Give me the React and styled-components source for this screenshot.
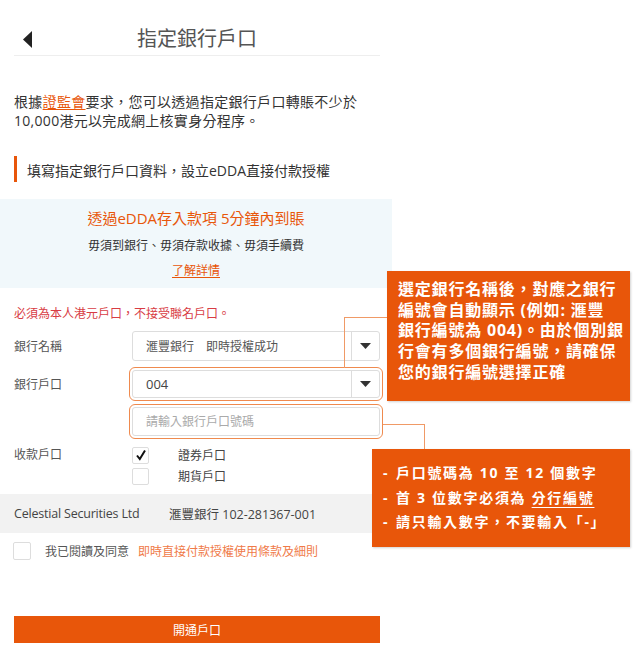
import React from 'react';
import styled, { createGlobalStyle, css } from 'styled-components';

const ORANGE = '#e8560a';

const GlobalStyle = createGlobalStyle`
  html, body {
    margin: 0;
    padding: 0;
    background: #fff;
  }
  body {
    font-family: "Open Sans", "Noto Sans CJK TC", sans-serif;
    color: #333;
  }
  * { box-sizing: border-box; }
`;

const Page = styled.div`
  position: relative;
  width: 642px;
  height: 665px;
  overflow: hidden;
`;

const Column = styled.div`
  width: 392px;
`;

const Header = styled.div`
  display: grid;
  grid-template-columns: 40px 1fr 40px;
  align-items: center;
  height: 56px;
  margin: 0 12px 0 14px;
  padding-top: 26px;
  padding-bottom: 4px;
  border-bottom: 1px solid #eeeeee;
`;

const Back = styled.div`
  display: flex;
  align-items: center;
  padding-left: 9px;
`;

const Title = styled.h1`
  margin: 0;
  text-align: center;
  font-size: 20px;
  font-weight: 400;
  line-height: 26px;
  color: #555;
`;

const Intro = styled.p`
  margin: 36px 12px 0 14px;
  font-size: 14px;
  line-height: 19px;
  letter-spacing: 0.3px;
  color: #333;
`;

const OrangeLink = styled.a`
  color: ${ORANGE};
  text-decoration: underline;
  text-underline-offset: 2px;
`;

const SectionTitle = styled.h2`
  display: flex;
  align-items: center;
  height: 26px;
  margin: 26px 12px 0 14px;
  padding: 2px 0 0 10px;
  border-left: 3px solid ${ORANGE};
  font-size: 14px;
  font-weight: 400;
  color: #333;
`;

const InfoPanel = styled.div`
  margin-top: 17px;
  padding: 9px 0 7px;
  background: #f1f8fb;
  text-align: center;
`;

const PanelTitle = styled.div`
  font-size: 15px;
  line-height: 20px;
  color: ${ORANGE};
`;

const PanelText = styled.div`
  margin-top: 8px;
  font-size: 12px;
  line-height: 20px;
  color: #333;
`;

const PanelLink = styled(OrangeLink)`
  display: inline-block;
  margin-top: 5px;
  font-size: 12px;
  line-height: 20px;
`;

const Form = styled.div`
  padding: 0 12px 0 14px;
`;

const Notice = styled.div`
  margin-top: 17px;
  font-size: 12px;
  line-height: 18px;
  color: #d83c44;
`;

const Row = styled.div`
  display: grid;
  grid-template-columns: 118px 1fr;
  align-items: ${p => (p.top ? 'start' : 'center')};
  margin-top: ${p => p.gap}px;
`;

const Label = styled.div`
  font-size: 12px;
  line-height: 17px;
  color: #555;
`;

const highlight = css`
  outline: 1px solid #ef8a4e;
  outline-offset: 2px;
`;

const Select = styled.div`
  display: flex;
  height: ${p => p.h || 30}px;
  border: 1px solid #dddddd;
  border-radius: 3px;
  background: #fff;
  ${p => p.highlight && highlight}
`;

const SelectValue = styled.div`
  flex: 1;
  display: flex;
  align-items: center;
  padding-left: 13px;
  font-size: ${p => (p.num ? 13 : 12)}px;
  color: ${p => (p.num ? '#444' : '#555')};
`;

const ArrowCell = styled.div`
  display: flex;
  align-items: center;
  justify-content: center;
  width: 28px;
  border-left: 1px solid #dddddd;
`;

const Input = styled.input`
  display: block;
  width: 100%;
  height: 29px;
  padding: 0 0 0 13px;
  border: 1px solid #dddddd;
  border-radius: 3px;
  font-family: inherit;
  font-size: 12px;
  color: #444;
  ${p => p.highlight && highlight}

  &::placeholder {
    color: #aaa;
  }
`;

const Checks = styled.div`
  display: flex;
  flex-direction: column;
  gap: 3px;
`;

const CheckItem = styled.div`
  display: flex;
  align-items: center;
`;

const Box = styled.div`
  display: flex;
  align-items: center;
  justify-content: center;
  width: ${p => p.size}px;
  height: ${p => p.size}px;
  border: 1px solid #dddddd;
  border-radius: 2px;
  background: #fff;
  flex-shrink: 0;
`;

const CheckLabel = styled.span`
  margin-left: 29px;
  font-size: 12px;
  color: #444;
`;

const Band = styled.div`
  display: flex;
  align-items: center;
  height: 39px;
  margin-top: 9px;
  padding-left: 14px;
  background: #f2f2f2;
  font-size: 12.5px;
  color: #444;
`;

const Company = styled.span`
  width: 155px;
  letter-spacing: -0.2px;
`;

const AgreeRow = styled.div`
  display: flex;
  align-items: center;
  margin-top: 9px;
  padding-left: 13px;
`;

const AgreeText = styled.span`
  margin-left: 14px;
  font-size: 12px;
  color: #555;
`;

const AgreeLink = styled.span`
  margin-left: 9px;
  font-size: 12px;
  color: #f07a48;
`;

const Submit = styled.button`
  display: block;
  width: 366px;
  height: 27px;
  margin: 56px 12px 0 14px;
  border: none;
  background: ${ORANGE};
  color: #fff;
  font-family: inherit;
  font-size: 12px;
`;

const Callout = styled.div`
  position: absolute;
  left: ${p => p.x}px;
  top: ${p => p.y}px;
  width: ${p => p.w}px;
  height: ${p => p.h}px;
  background: ${ORANGE};
  color: #fff;
  font-weight: 700;
  white-space: nowrap;
  box-shadow: 1px 1px 2px rgba(0, 0, 0, 0.18);
`;

const CalloutOne = styled(Callout)`
  padding: 8px 4px 0 11px;
  font-size: 16px;
  line-height: 20.7px;
  letter-spacing: 0.8px;
`;

const CalloutTwo = styled(Callout)`
  padding: 12px 4px 0 11px;
  font-size: 14px;
  line-height: 24.5px;
  letter-spacing: 1.7px;
`;

const Bullet = styled.div`
  display: flex;
`;

const Dash = styled.span`
  width: 13px;
  flex-shrink: 0;
`;

const WhiteUnderline = styled.span`
  text-decoration: underline;
  text-underline-offset: 4px;
`;

const Connector = styled.div`
  position: absolute;
  left: ${p => p.x}px;
  top: ${p => p.y}px;
  width: ${p => p.w}px;
  height: ${p => p.h}px;
  border-top: 1px solid #f09a66;
  ${p => (p.side === 'left'
    ? 'border-left: 1px solid #f09a66;'
    : 'border-right: 1px solid #f09a66;')}
`;

const BackArrow = () => (
  <svg width="9" height="17" viewBox="0 0 9 17">
    <polygon points="9,0 9,17 0,8.5" fill="#222" />
  </svg>
);

const Caret = () => (
  <svg width="11" height="6" viewBox="0 0 11 6">
    <polygon points="0,0 11,0 5.5,6" fill="#333" />
  </svg>
);

const Tick = () => (
  <svg width="12" height="12" viewBox="0 0 12 12">
    <path d="M2 6.5 L4.8 10 L10 1.5" fill="none" stroke="#111" strokeWidth="2" />
  </svg>
);

export default function App() {
  return (
    <Page>
      <GlobalStyle />
      <Column>
        <Header>
          <Back><BackArrow /></Back>
          <Title>指定銀行戶口</Title>
          <span />
        </Header>

        <Intro>
          根據<OrangeLink>證監會</OrangeLink>要求，您可以透過指定銀行戶口轉賬不少於<br />
          10,000港元以完成網上核實身分程序。
        </Intro>

        <SectionTitle>填寫指定銀行戶口資料，設立eDDA直接付款授權</SectionTitle>

        <InfoPanel>
          <PanelTitle>透過eDDA存入款項 5分鐘內到賬</PanelTitle>
          <PanelText>毋須到銀行、毋須存款收據、毋須手續費</PanelText>
          <PanelLink>了解詳情</PanelLink>
        </InfoPanel>

        <Form>
          <Notice>必須為本人港元戶口，不接受聯名戶口。</Notice>

          <Row gap={8}>
            <Label>銀行名稱</Label>
            <Select h={30}>
              <SelectValue>滙豐銀行　即時授權成功</SelectValue>
              <ArrowCell><Caret /></ArrowCell>
            </Select>
          </Row>

          <Row gap={9}>
            <Label>銀行戶口</Label>
            <Select h={28} highlight>
              <SelectValue num>004</SelectValue>
              <ArrowCell><Caret /></ArrowCell>
            </Select>
          </Row>

          <Row gap={9}>
            <span />
            <Input highlight placeholder="請輸入銀行戶口號碼" />
          </Row>

          <Row gap={10} top>
            <Label>收款戶口</Label>
            <Checks>
              <CheckItem>
                <Box size={17}><Tick /></Box>
                <CheckLabel>證券戶口</CheckLabel>
              </CheckItem>
              <CheckItem>
                <Box size={17} />
                <CheckLabel>期貨戶口</CheckLabel>
              </CheckItem>
            </Checks>
          </Row>
        </Form>

        <Band>
          <Company>Celestial Securities Ltd</Company>
          <span>滙豐銀行 102-281367-001</span>
        </Band>

        <AgreeRow>
          <Box size={18} />
          <AgreeText>我已閱讀及同意</AgreeText>
          <AgreeLink>即時直接付款授權使用條款及細則</AgreeLink>
        </AgreeRow>

        <Submit>開通戶口</Submit>
      </Column>

      <Connector side="left" x={344} y={317} w={43} h={51} />
      <CalloutOne x={387} y={271} w={243} h={130}>
        選定銀行名稱後，對應之銀行<br />
        編號會自動顯示 (例如: 滙豐<br />
        銀行編號為 004)。由於個別銀<br />
        行會有多個銀行編號，請確保<br />
        您的銀行編號選擇正確
      </CalloutOne>

      <Connector side="right" x={383} y={424} w={42} h={25} />
      <CalloutTwo x={372} y={449} w={258} h={98}>
        <Bullet><Dash>-</Dash><span>戶口號碼為 10 至 12 個數字</span></Bullet>
        <Bullet><Dash>-</Dash><span>首 3 位數字必須為 <WhiteUnderline>分行編號</WhiteUnderline></span></Bullet>
        <Bullet><Dash>-</Dash><span>請只輸入數字，不要輸入「-」</span></Bullet>
      </CalloutTwo>
    </Page>
  );
}
